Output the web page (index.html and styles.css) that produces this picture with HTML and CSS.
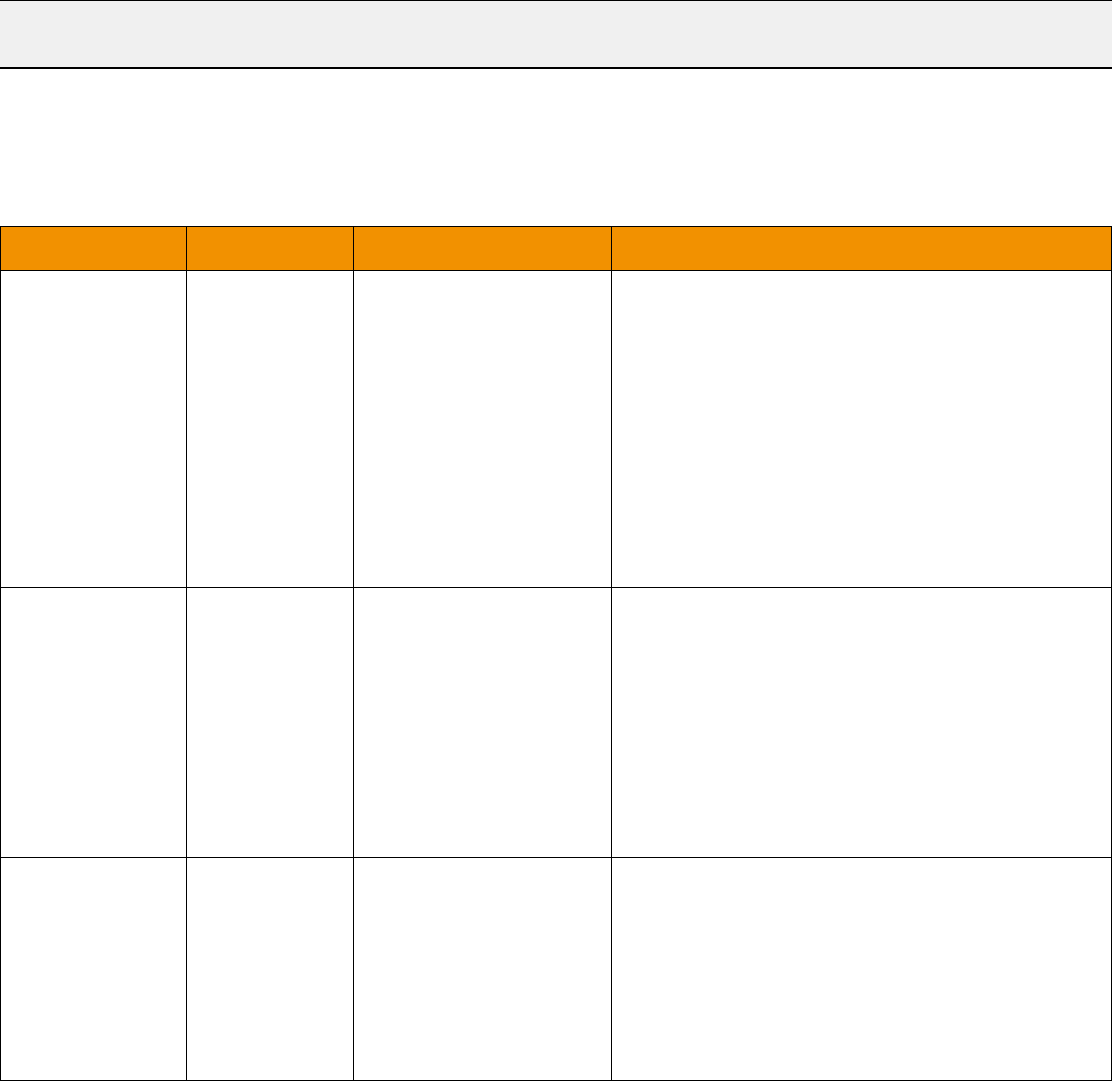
FILE: index.html
```html
<!DOCTYPE html>
<html lang="en">
<head>
<meta charset="utf-8">
<title>Table</title>
<link rel="stylesheet" href="styles.css">
</head>
<body>
<div class="page">
  <header class="topbar"></header>
  <div class="grid" role="table">
    <div class="cell head"></div>
    <div class="cell head"></div>
    <div class="cell head"></div>
    <div class="cell head"></div>
    <div class="cell r1"></div>
    <div class="cell r1"></div>
    <div class="cell r1"></div>
    <div class="cell r1"></div>
    <div class="cell r2"></div>
    <div class="cell r2"></div>
    <div class="cell r2"></div>
    <div class="cell r2"></div>
    <div class="cell r3"></div>
    <div class="cell r3"></div>
    <div class="cell r3"></div>
    <div class="cell r3"></div>
  </div>
</div>
</body>
</html>
```
FILE: styles.css
```css
html, body {
  margin: 0;
  padding: 0;
  background: #ffffff;
  font-family: "Liberation Sans", Arial, sans-serif;
}
.page {
  width: 1112px;
  display: flex;
  flex-direction: column;
}
.topbar {
  height: 66px;
  background: #f0f0f0;
  border-top: 1px solid #000;
  border-bottom: 2px solid #000;
}
.grid {
  margin-top: 157px;
  display: grid;
  grid-template-columns: 186px 167px 258px 500px;
  grid-template-rows: 44px 317px 270px 223px;
  border-left: 1px solid #000;
  border-top: 1px solid #000;
}
.cell {
  border-right: 1px solid #000;
  border-bottom: 1px solid #000;
  background: #fff;
}
.head {
  background: #f29100;
}
```
